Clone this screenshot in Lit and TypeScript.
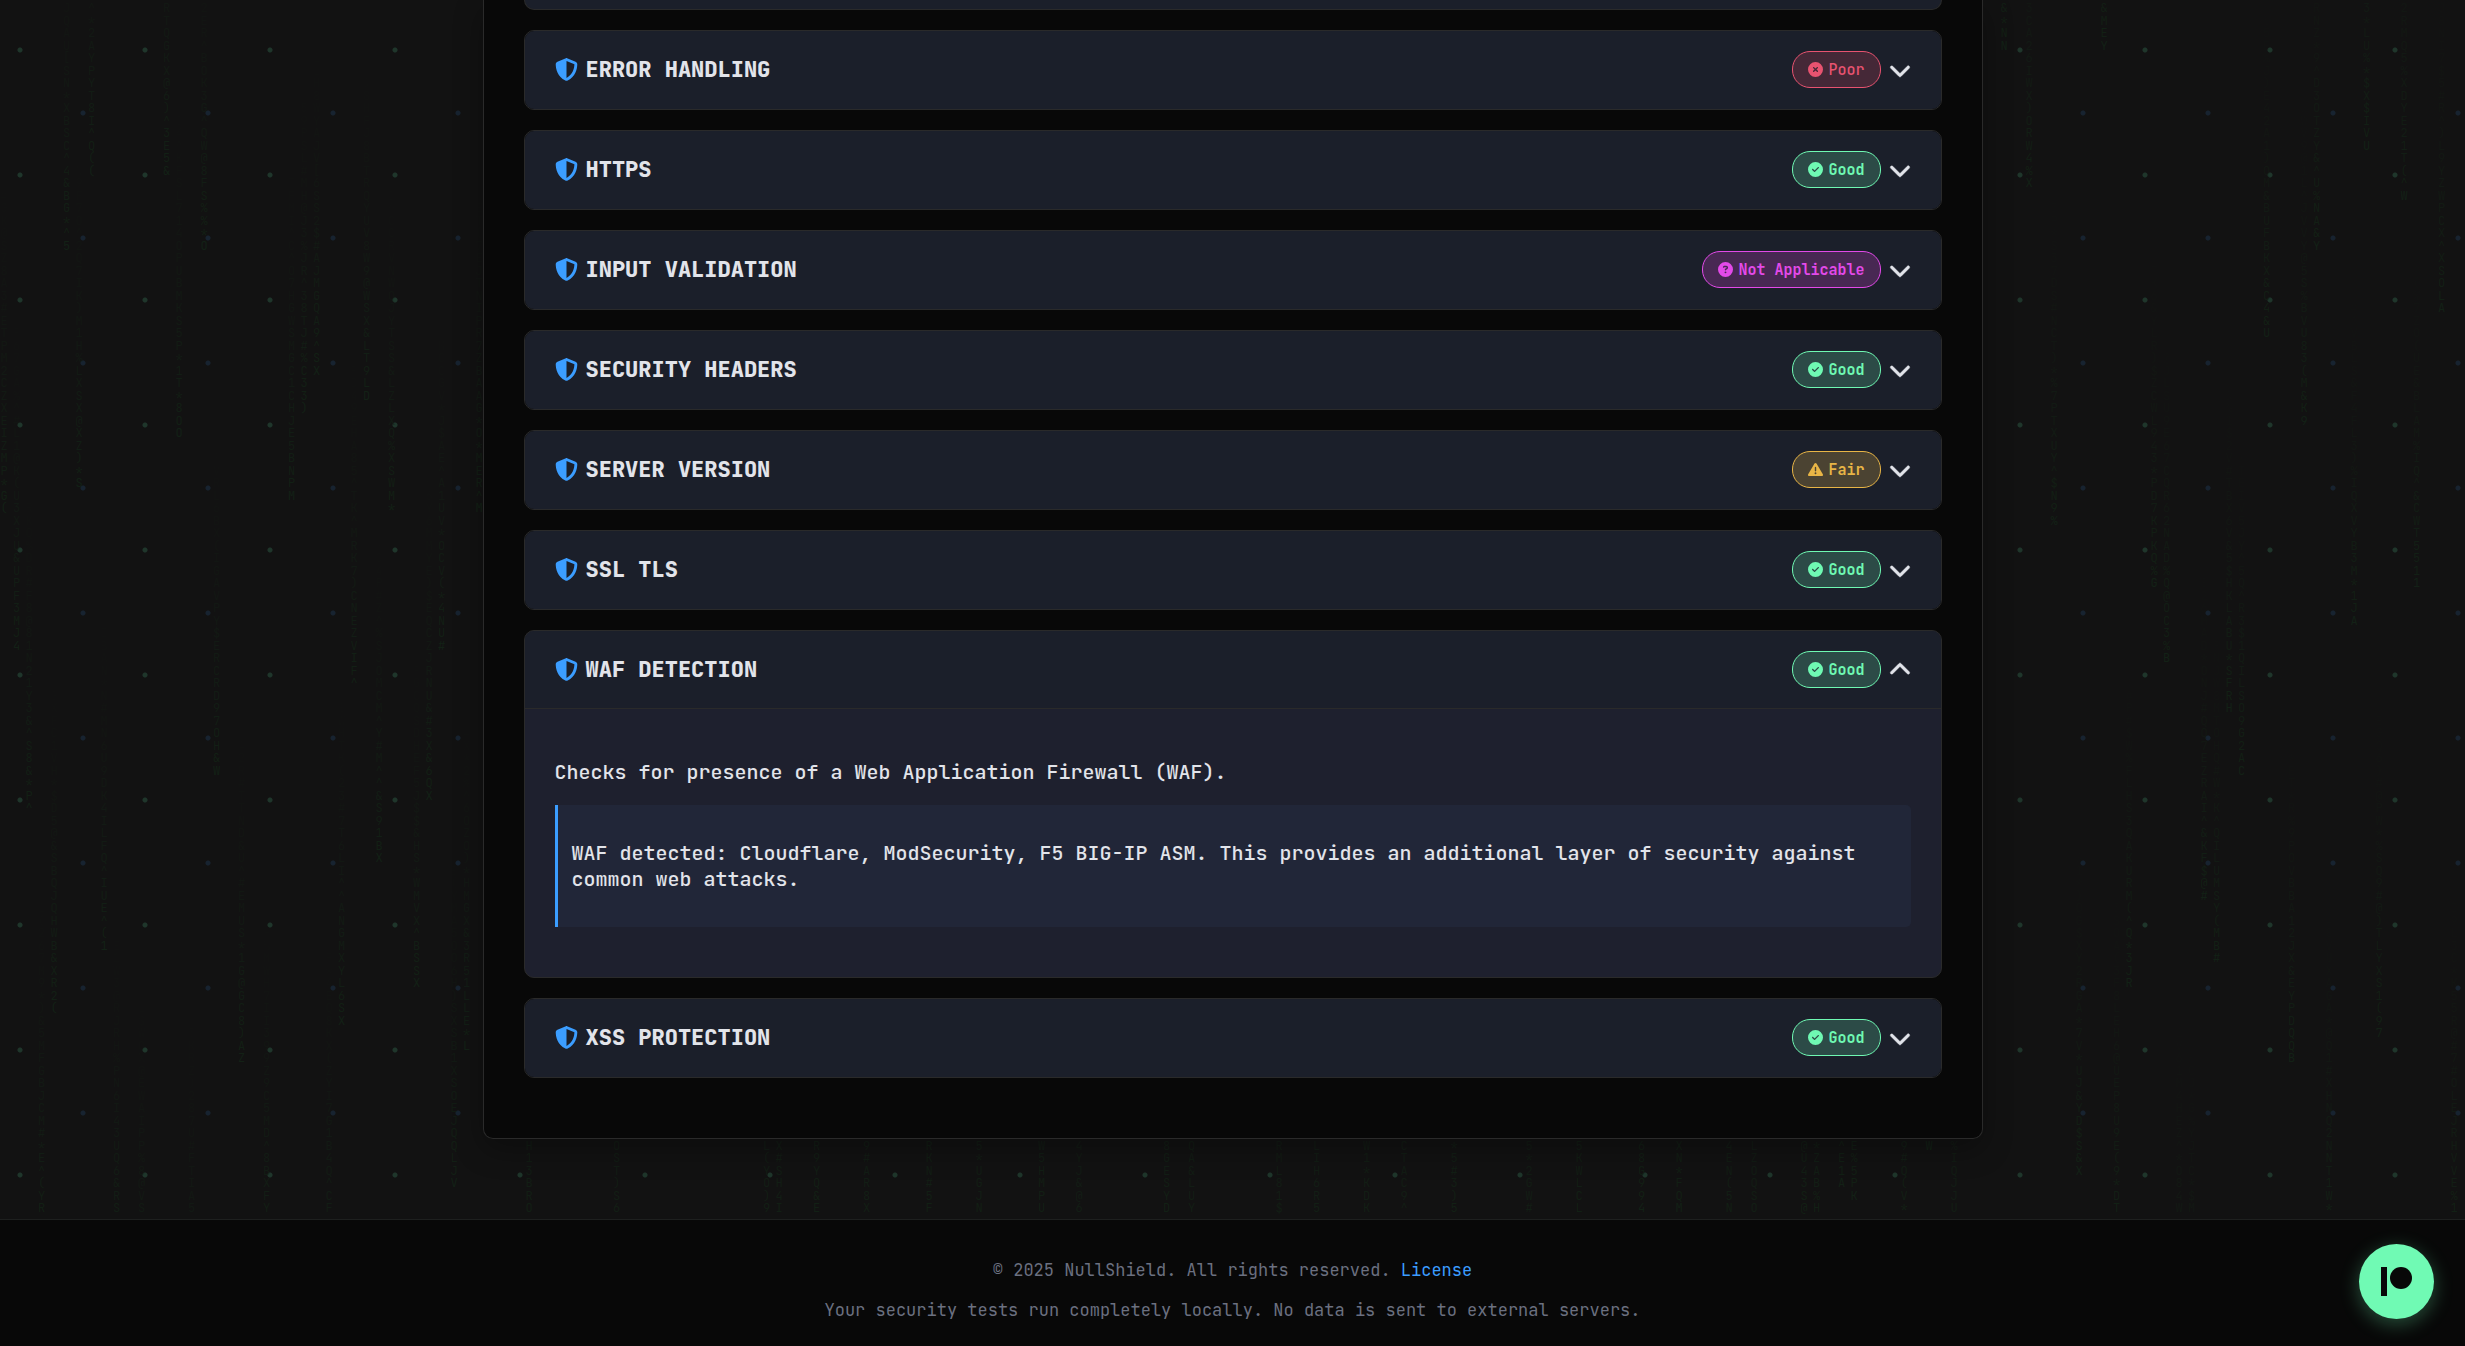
import { LitElement, html, css, svg, nothing } from "lit";
import { customElement, state } from "lit/decorators.js";
import { classMap } from "lit/directives/class-map.js";
import { styleMap } from "lit/directives/style-map.js";

type Rating = "good" | "fair" | "poor" | "na";

interface Check {
  id: string;
  title: string;
  rating: Rating;
  description?: string;
  finding?: string;
}

const CHECKS: Check[] = [
  { id: "error-handling", title: "ERROR HANDLING", rating: "poor" },
  { id: "https", title: "HTTPS", rating: "good" },
  { id: "input-validation", title: "INPUT VALIDATION", rating: "na" },
  { id: "security-headers", title: "SECURITY HEADERS", rating: "good" },
  { id: "server-version", title: "SERVER VERSION", rating: "fair" },
  { id: "ssl-tls", title: "SSL TLS", rating: "good" },
  {
    id: "waf-detection",
    title: "WAF DETECTION",
    rating: "good",
    description: "Checks for presence of a Web Application Firewall (WAF).",
    finding:
      "WAF detected: Cloudflare, ModSecurity, F5 BIG-IP ASM. This provides an additional layer of security against common web attacks.",
  },
  { id: "xss-protection", title: "XSS PROTECTION", rating: "good" },
];

const LABELS: Record<Rating, string> = {
  good: "Good",
  fair: "Fair",
  poor: "Poor",
  na: "Not Applicable",
};

const DISC = "M256 512A256 256 0 1 0 256 0a256 256 0 1 0 0 512z";

const RATING_ICONS: Record<Rating, string> = {
  good:
    DISC +
    "M369 209L241 337c-9.4 9.4-24.6 9.4-33.9 0l-64-64c-9.4-9.4-9.4-24.6 0-33.9s24.6-9.4 33.9 0l47 47L335 175c9.4-9.4 24.6-9.4 33.9 0s9.4 24.6 0 33.9z",
  fair: "M256 32c14.2 0 27.3 7.5 34.5 19.8l216 368c7.3 12.4 7.3 27.7 .2 40.1S486.3 480 472 480H40c-14.3 0-27.6-7.7-34.7-20.1s-7-27.8 .2-40.1l216-368C228.7 39.5 241.8 32 256 32zm0 128c-13.3 0-24 10.7-24 24V296c0 13.3 10.7 24 24 24s24-10.7 24-24V184c0-13.3-10.7-24-24-24zm32 224a32 32 0 1 0 -64 0 32 32 0 1 0 64 0z",
  poor:
    DISC +
    "M175 175c9.4-9.4 24.6-9.4 33.9 0l47 47 47-47c9.4-9.4 24.6-9.4 33.9 0s9.4 24.6 0 33.9l-47 47 47 47c9.4 9.4 9.4 24.6 0 33.9s-24.6 9.4-33.9 0l-47-47-47 47c-9.4 9.4-24.6 9.4-33.9 0s-9.4-24.6 0-33.9l47-47-47-47c-9.4-9.4-9.4-24.6 0-33.9z",
  na:
    DISC +
    "M169.8 165.3c7.9-22.3 29.1-37.3 52.8-37.3h58.3c34.9 0 63.1 28.3 63.1 63.1c0 22.6-12.1 43.5-31.7 54.8L280 264.4c-.2 13-10.9 23.6-24 23.6c-13.3 0-24-10.7-24-24V250.5c0-8.6 4.6-16.5 12.1-20.8l44.3-25.4c4.7-2.7 7.6-7.7 7.6-13.1c0-8.4-6.8-15.1-15.1-15.1H222.6c-3.4 0-6.4 2.1-7.5 5.3l-.4 1.2c-4.4 12.5-18.2 19-30.6 14.6s-19-18.2-14.6-30.6l.4-1.2zM224 352a32 32 0 1 1 64 0 32 32 0 1 1 -64 0z",
};

const SHIELD =
  "M256 0c4.6 0 9.2 1 13.4 2.9L457.7 82.8c22 9.3 38.4 31 38.3 57.2c-.5 99.2-41.3 280.7-213.6 363.2c-16.7 8-36.1 8-52.8 0C57.3 420.7 16.5 239.2 16 140c-.1-26.2 16.3-47.9 38.3-57.2L242.7 2.9C246.8 1 251.4 0 256 0zm0 66.8V444.8C394 378 431.1 230.1 432 141.4L256 66.8z";
const CHEVRON_DOWN =
  "M233.4 406.6c12.5 12.5 32.8 12.5 45.3 0l192-192c12.5-12.5 12.5-32.8 0-45.3s-32.8-12.5-45.3 0L256 338.7 86.6 169.4c-12.5-12.5-32.8-12.5-45.3 0s-12.5 32.8 0 45.3l192 192z";
const CHEVRON_UP =
  "M233.4 105.4c12.5-12.5 32.8-12.5 45.3 0l192 192c12.5 12.5 12.5 32.8 0 45.3s-32.8 12.5-45.3 0L256 173.3 86.6 342.6c-12.5 12.5-32.8 12.5-45.3 0s-12.5-32.8 0-45.3l192-192z";

/* Falling glyph streams: column on the glyph grid, row of the leading glyph, last glyphs. */
const CELL = 12.5;
const STREAM_LENGTH = 30;
const LAST_ROW = 97;
const STREAMS: [number, number, string][] = [
  [0, 41, "SZ8A3#ETPM2CZXEIZMP*G("],
  [1, 52, "U&UPF3MJ4"],
  [2, 65, "21Y3&^S8&*P^"],
  [3, 98, "*E^(YR4"],
  [4, 81, "&SBQJQHWB&XR2("],
  [5, 20, "JQAU[SN*XBSC^4&BG*^5"],
  [6, 39, "2Q7IK)M1H%LXSX@XZ)*S"],
  [7, 14, "^*2AYPYT8I^Q(("],
  [8, 76, "ILFQ^IUE^(1"],
  [9, 101, "I43UQ6&RSWMN*"],
  [11, 106, "KM"],
  [13, 14, "RTQGKX@6)^3E5&"],
  [14, 35, "OPUBMKS5P*1T*8OO"],
  [15, 108, "EHS"],
  [16, 20, "2ER^BOK3G^QW@8FS%%*O"],
  [17, 62, "Y$ERCRD97OH&W"],
  [19, 85, "#EMUS*1G@GC8)AZ"],
  [21, 100, "5MD^8BXFYM*^"],
  [23, 40, "C^O7HGWSMGC1CHJE5BNPM"],
  [24, 33, "PSL#MH@J3%JR^38TJ#%C33)"],
  [25, 30, "AJV[6SS2$#AJMGQA9^SX"],
  [26, 102, "Q^CFIVJ*5"],
  [27, 82, "I^^ANGMXYL6SX"],
  [28, 55, "MRK7)CNEZVIF^"],
  [29, 32, "J8BTRQYUV8W9@WSX&LT9LD"],
  [30, 69, "M^Y#M^^&S91BX"],
  [31, 41, "CRVNWQJYTSS&LZLXQ%XSWM*"],
  [33, 79, "HS*WMVX^BSSX"],
  [34, 64, "CZJRNU&#3X&6QX"],
  [35, 52, "UV*OCV(*4NU#"],
  [36, 95, "SB1XSOEJQQLJV"],
  [37, 84, "GX&3R51LLE*L"],
  [38, 41, "NIPR7ZBAAG*O*MER^M"],
  [42, 99, ""], [49, 100, "O5"], [61, 99, "(YO)9UT"], [62, 99, "#SH4IQ3"],
  [65, 98, ""], [69, 99, ""], [74, 98, "S"], [78, 99, ""], [83, 98, "U4"],
  [86, 101, ""], [93, 98, "D*"], [95, 100, ""], [102, 101, ""], [105, 100, ""],
  [109, 99, ""], [112, 100, ""], [116, 98, "*5#3)5C"], [122, 101, ""],
  [126, 98, "KWLCLP"], [131, 97, "&68G994"], [134, 97, "XN*FQM"],
  [138, 99, ""], [140, 101, ""], [144, 98, "U43S@L"], [145, 98, "ZAB%HY"],
  [147, 95, "^E1A"], [148, 96, "6E%5PK"], [152, 98, "#Q(V*K"], [154, 92, "W"],
  [156, 101, ""],
  [160, 4, "&*NN"],
  [162, 15, "3CA26IWX)ORW4%X"],
  [164, 42, "CT)*%7PTXUY^$N9%"],
  [166, 94, "V*UJ&YD$S&X"],
  [168, 4, "&MEY"],
  [169, 98, "EP8U9E(9*DTQ"],
  [170, 79, "S3QAKURM(^Q*3JR"],
  [172, 47, "WL943*PD7KPKQ%G"],
  [173, 53, "QR62NAD%Q@OC3%B"],
  [174, 108, ""], [175, 110, ""],
  [176, 72, "Q7EZRAI^&KF$@#"],
  [177, 77, "W*K^QILUMSY(MB#"],
  [178, 57, "V&5$HKLABU*SFRH"],
  [179, 62, "Q^R3$1QILSO9G2AC"],
  [181, 27, "QM&BUFBKX&C4&U"],
  [183, 85, "12JX&EYPDQQB"],
  [184, 34, "@5S%BVU83(M&K9"],
  [185, 20, "RNZ*9^D3OTZY&^U%NA&Y"],
  [186, 99, "NNT1W*NL"],
  [188, 50, "%IQXVYB3M*1JA"],
  [189, 12, "3*LU%*$X$IVU"],
  [190, 83, "*%SQ9#@)TLYXS1(97"],
  [192, 16, "2RMQ5%XDYE21T(^W"],
  [193, 47, "AM%IQ^&CWT5511"],
  [195, 25, "R^)L9YZWPCX^XSOLA"],
  [196, 98, "EJRHVVE%1Q"],
];

const ALPHABET = "ABCDEFGHIJKLMNOPQRSTUVWXYZ123456789@#$%^&*()";

function streamGlyphs(seed: number, tail: string): string[] {
  const glyphs: string[] = [];
  let n = seed * 7919 + 13;
  for (let i = Math.min(tail.length, STREAM_LENGTH); i < STREAM_LENGTH; i++) {
    n = (n * 1103 + 12345) % 65521;
    glyphs.push(ALPHABET[n % ALPHABET.length]);
  }
  return [...glyphs, ...tail];
}

const icon = (path: string, cls: string) => html`
  <svg class=${cls} viewBox="0 0 512 512" aria-hidden="true">${svg`<path d=${path}></path>`}</svg>
`;

@customElement("matrix-backdrop")
class MatrixBackdrop extends LitElement {
  static styles = css`
    :host {
      display: block;
      position: absolute;
      inset: 0;
      overflow: hidden;
      background:
        radial-gradient(circle at 20px 50px, #1f362b 0 2px, transparent 3px) 0 0 / 125px 125px,
        radial-gradient(circle at 83px 113px, #172330 0 2px, transparent 3px) 0 0 / 125px 125px,
        #121212;
    }
    .stream {
      position: absolute;
      display: grid;
      grid-auto-rows: 1fr;
      width: 8px;
      color: #132116;
      font: 12px/1 "JetBrains Mono", "Liberation Mono", monospace;
      text-align: center;
    }
  `;

  private renderStream([column, end, tail]: [number, number, string]) {
    const start = end - STREAM_LENGTH;
    const cells = streamGlyphs(column, tail)
      .map((glyph, i) => ({ glyph, row: start + i, opacity: Math.min(1, ((i + 1) / STREAM_LENGTH) ** 1.5) }))
      .filter(({ row }) => row >= 0 && row < LAST_ROW);
    if (!cells.length) return nothing;
    return html`
      <div
        class="stream"
        style=${styleMap({
          left: `${column * CELL}px`,
          top: `${cells[0].row * CELL + 2}px`,
          height: `${cells.length * CELL}px`,
        })}
      >
        ${cells.map(({ glyph, opacity }) => html`<span style=${styleMap({ opacity: opacity.toFixed(2) })}>${glyph}</span>`)}
      </div>
    `;
  }

  render() {
    return STREAMS.map((stream) => this.renderStream(stream));
  }
}

@customElement("app-root")
class AppRoot extends LitElement {
  static styles = css`
    :host {
      display: block;
      min-height: 100vh;
      background: #080808;
      color: #e2e4ea;
      font-family: "JetBrains Mono", "DejaVu Sans Mono", "Liberation Mono", monospace;
    }
    * {
      box-sizing: border-box;
    }
    h3,
    p {
      margin: 0;
    }
    .stage {
      position: relative;
      padding-bottom: 80px;
    }
    .panel {
      position: relative;
      display: flex;
      flex-direction: column;
      gap: 20px;
      max-width: 1500px;
      margin: 0 auto;
      padding: 0 40px 60px;
      background: #080808;
      border: 1px solid #2a2a2a;
      border-top: 0;
      border-radius: 0 0 10px 10px;
      box-shadow: 0 10px 30px rgb(0 0 0 / 30%);
    }
    .card {
      overflow: hidden;
      background: #1e202e;
      border: 1px solid #2a2a2a;
      border-radius: 10px;
    }
    .card-end {
      height: 10px;
      background: #1b1f2a;
      border-top: 0;
      border-radius: 0 0 10px 10px;
    }
    .header {
      display: flex;
      align-items: center;
      gap: 8px;
      width: 100%;
      padding: 20px 30px;
      border: 0;
      border-bottom: 1px solid transparent;
      background: #1b1f2a;
      color: inherit;
      font: bold 22px/24px "JetBrains Mono", "DejaVu Sans Mono", "Liberation Mono", monospace;
      text-align: left;
      cursor: pointer;
    }
    .open .header {
      border-bottom-color: #2a2a2a;
    }
    .title {
      flex: 1;
      font-weight: 800;
    }
    svg {
      flex: none;
      display: block;
      fill: currentColor;
    }
    .shield {
      width: 23px;
      height: 23px;
      color: #3b9dff;
    }
    .chevron {
      width: 22px;
      height: 22px;
      stroke: currentColor;
      stroke-width: 12px;
    }
    .badge {
      display: inline-flex;
      align-items: center;
      gap: 5px;
      height: 37px;
      padding: 0 15px;
      border: 1px solid currentColor;
      border-radius: 18px;
      font-size: 15px;
      line-height: 20px;
    }
    .badge-icon {
      width: 15px;
      height: 15px;
    }
    .good {
      color: #6ff9b3;
      background: #2c4b47;
    }
    .fair {
      color: #e8b546;
      background: #4b4332;
    }
    .poor {
      color: #e85370;
      background: #452837;
      font-weight: 500;
    }
    .na {
      color: #e34ae9;
      background: #482853;
    }
    .body {
      display: flex;
      flex-direction: column;
      gap: 20px;
      padding: 50px 30px;
      font-size: 20px;
      font-weight: 500;
      line-height: 26px;
    }
    .finding {
      padding: 35px 14px;
      background: #212638;
      border-left: 3px solid #3b9dff;
      border-radius: 0 5px 5px 0;
    }
    .footer {
      position: relative;
      display: flex;
      flex-direction: column;
      gap: 16px;
      padding: 38px 40px 24px;
      border-top: 1px solid #1e201f;
      background: #080808;
      color: #6b7080;
      font-size: 17px;
      line-height: 24px;
      text-align: center;
    }
    .link {
      color: #3b9dff;
      text-decoration: none;
    }
    .support {
      position: fixed;
      right: 31px;
      bottom: 27px;
      display: grid;
      place-items: center;
      width: 75px;
      height: 75px;
      border-radius: 50%;
      background: #70fab4;
      color: #080808;
      box-shadow: 0 5px 19px rgb(112 250 180 / 30%);
    }
    .support-icon {
      width: 31px;
      height: 29px;
    }
  `;

  @state() private openId = "waf-detection";

  private toggle(id: string) {
    this.openId = this.openId === id ? "" : id;
  }

  private renderCheck(check: Check) {
    const open = this.openId === check.id;
    return html`
      <section class=${classMap({ card: true, open })}>
        <h3>
          <button class="header" aria-expanded=${open} @click=${() => this.toggle(check.id)}>
            ${icon(SHIELD, "shield")}
            <span class="title">${check.title}</span>
            <span class=${`badge ${check.rating}`}>
              ${icon(RATING_ICONS[check.rating], "badge-icon")}${LABELS[check.rating]}
            </span>
            ${icon(open ? CHEVRON_UP : CHEVRON_DOWN, "chevron")}
          </button>
        </h3>
        ${open && check.description
          ? html`
              <div class="body">
                <p>${check.description}</p>
                <p class="finding">${check.finding}</p>
              </div>
            `
          : nothing}
      </section>
    `;
  }

  render() {
    return html`
      <div class="stage">
        <matrix-backdrop aria-hidden="true"></matrix-backdrop>
        <main class="panel">
          <div class="card card-end"></div>
          ${CHECKS.map((check) => this.renderCheck(check))}
        </main>
      </div>
      <footer class="footer">
        <p>© 2025 NullShield. All rights reserved. <a class="link" href="#license">License</a></p>
        <p>Your security tests run completely locally. No data is sent to external servers.</p>
      </footer>
      <a class="support" href="#support" aria-label="Support on Patreon">
        <svg class="support-icon" viewBox="0 0 31 29" aria-hidden="true">
          <rect x="0" y="0" width="6" height="29"></rect>
          <circle cx="20" cy="11" r="11"></circle>
        </svg>
      </a>
    `;
  }
}
